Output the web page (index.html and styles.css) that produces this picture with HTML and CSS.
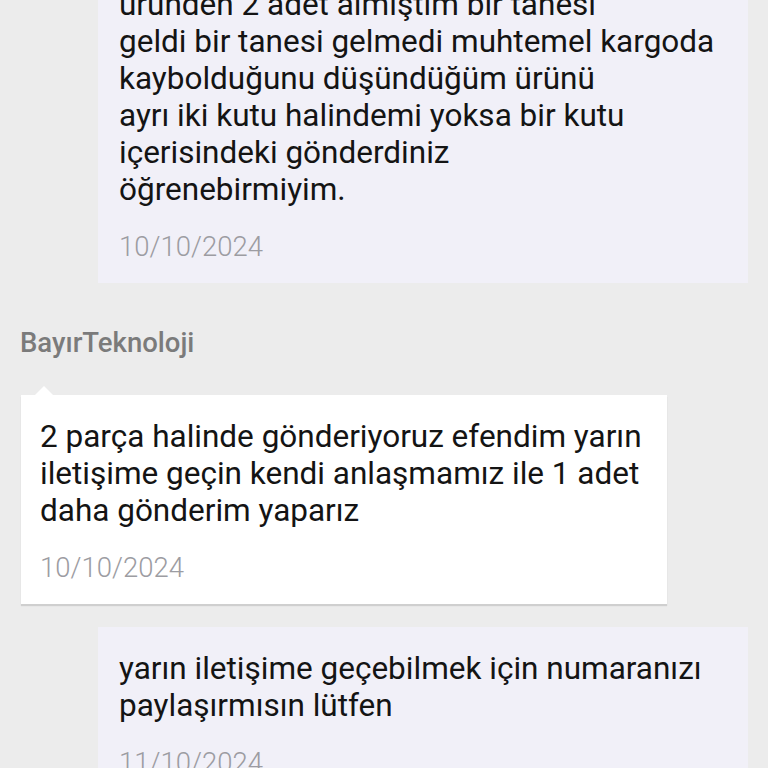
FILE: index.html
```html
<!DOCTYPE html>
<html lang="tr">
<head>
  <meta charset="UTF-8">
  <meta name="viewport" content="width=device-width, initial-scale=1.0">
  <title>Mesajlar</title>
  <link rel="stylesheet" href="styles.css">
</head>
<body>

  <!-- Message list -->
  <div class="chat">

    <div class="message sent first">
      <p class="text">üründen 2 adet almıştım bir tanesi<br>geldi bir tanesi gelmedi muhtemel kargoda<br>kaybolduğunu düşündüğüm ürünü<br>ayrı iki kutu halindemi yoksa bir kutu<br>içerisindeki gönderdiniz<br>öğrenebirmiyim.</p>
      <div class="date">10/10/2024</div>
    </div>

    <div class="sender">BayırTeknoloji</div>

    <div class="message received">
      <p class="text">2 parça halinde gönderiyoruz efendim yarın iletişime geçin kendi anlaşmamız ile 1 adet daha gönderim yaparız</p>
      <div class="date">10/10/2024</div>
    </div>

    <div class="message sent">
      <p class="text">yarın iletişime geçebilmek için numaranızı paylaşırmısın lütfen</p>
      <div class="date">11/10/2024</div>
    </div>

  </div>

</body>
</html>
```

FILE: styles.css
```css
/* General styles */
body {
  background-color: #ececec;
  font-family: 'Roboto', 'Liberation Sans', sans-serif;
  margin: 0;
  height: 768px;
  overflow: hidden;
}

.chat {
  display: flex;
  flex-direction: column;
}

/* Bubbles */
.message {
  padding: 23px 20px 21px 20px;
  box-sizing: border-box;
}

.message .text {
  margin: 0;
  font-size: 31.5px;
  line-height: 37px;
  color: #141414;
}

.message .date {
  margin-top: 24px;
  font-size: 27.5px;
  line-height: 30px;
  color: #9c9ca2;
  font-weight: 300;
}

.message.sent {
  background-color: #f1f0f8;
  margin: 0 20px 0 98px;
  padding-left: 21px;
}

.message.sent.first {
  margin-top: -37px;
}

.message.received {
  position: relative;
  background-color: #ffffff;
  margin: 0 101px 23px 21px;
  padding-left: 19px;
  box-shadow: 0 2px 1px rgba(0, 0, 0, 0.12);
}

/* little pointer on top of the received bubble */
.message.received::before {
  content: '';
  position: absolute;
  top: -9px;
  left: 14px;
  border-left: 9px solid transparent;
  border-right: 9px solid transparent;
  border-bottom: 9px solid #ffffff;
}

.sender {
  margin: 45px 0 37px 20px;
  font-size: 27.5px;
  line-height: 30px;
  font-weight: 500;
  color: #7b7b7b;
}
```
